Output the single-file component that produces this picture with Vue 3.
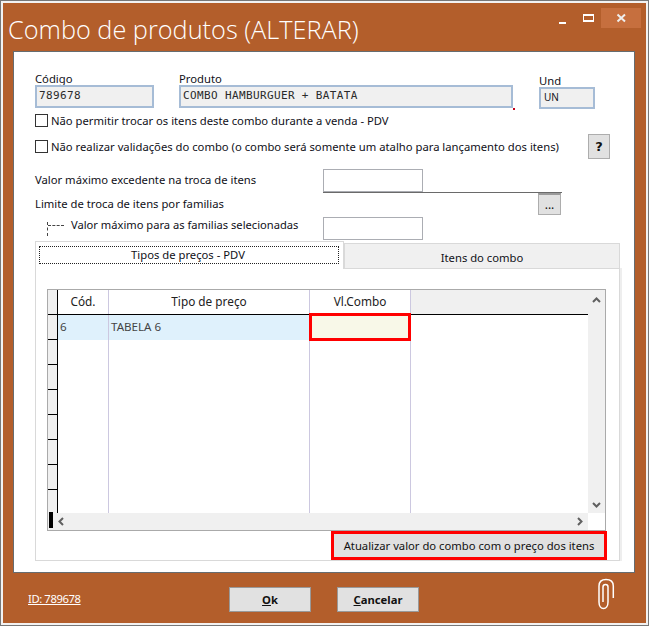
<script setup>
const rows = [0,1,2,3,4,5,6,7]
</script>

<template>
  <div class="win">
    <header class="titlebar">
      <h1 class="title">Combo de produtos (ALTERAR)</h1>
      <div class="caps">
        <span class="cap"><i class="min"></i></span>
        <span class="cap"><i class="max"></i></span>
        <span class="cap close">
          <svg width="11" height="10" viewBox="0 0 11 10"><path d="M1.5 1.5 9 8.5M9 1.5 1.5 8.5" stroke="#eee" stroke-width="2" fill="none"/></svg>
        </span>
      </div>
    </header>

    <main class="client">
      <section class="top">
        <div class="field f-cod"><label>Código</label><div class="inp mono">789678</div></div>
        <div class="field f-prod"><label>Produto</label><div class="inp mono">COMBO HAMBURGUER + BATATA</div><b class="dot"></b></div>
        <div class="field f-und"><label>Und</label><div class="inp und">UN</div></div>
      </section>

      <div class="chk c1"><span class="box"></span><span>Não permitir trocar os itens deste combo durante a venda - PDV</span></div>
      <div class="chk c2"><span class="box"></span><span>Não realizar validações do combo (o combo será somente um atalho para lançamento dos itens)</span><button class="help">?</button></div>

      <div class="line l1"><span class="lbl">Valor máximo excedente na troca de itens</span><div class="box-in"></div></div>
      <div class="line l2"><span class="lbl">Limite de troca de itens por familias</span>
        <div class="lookup"><button class="dots">...</button></div>
      </div>
      <div class="line l3">
        <span class="tree"></span><span class="l3t">Valor máximo para as familias selecionadas</span><div class="box-in"></div>
      </div>

      <div class="tabs">
        <div class="tab active"><span class="focus">Tipos de preços - PDV</span></div>
        <div class="tab other">Itens do combo</div>
      </div>
      <div class="panel">
        <div class="grid">
          <div class="gbody">
            <div class="ghead">
              <div class="ind"></div>
              <div class="hc c-cod">Cód.</div>
              <div class="hc c-tipo">Tipo de preço</div>
              <div class="hc c-val">Vl.Combo</div>
              <div class="hfill"></div>
            </div>
            <div class="grow sel">
              <div class="ind"></div>
              <div class="dc c-cod">6</div>
              <div class="dc c-tipo">TABELA 6</div>
              <div class="dc c-val edit"></div>
            </div>
            <div class="grow" v-for="r in rows" :key="r">
              <div class="ind"></div>
              <div class="dc c-cod"></div>
              <div class="dc c-tipo"></div>
              <div class="dc c-val"></div>
            </div>
          </div>
          <div class="vbar">
            <svg width="9" height="6" viewBox="0 0 9 6"><path d="M1 5 4.500 1.500 8 5" fill="none" stroke="#606060" stroke-width="2"/></svg>
            <svg width="9" height="6" viewBox="0 0 9 6"><path d="M1 1 4.500 4.500 8 1" fill="none" stroke="#606060" stroke-width="2"/></svg>
          </div>
          <div class="hbar">
            <i class="hstub"></i>
            <svg width="6" height="9" viewBox="0 0 6 9"><path d="M5 1 1.500 4.500 5 8" fill="none" stroke="#606060" stroke-width="2"/></svg>
            <svg class="hr" width="6" height="9" viewBox="0 0 6 9"><path d="M1 1 4.500 4.500 1 8" fill="none" stroke="#606060" stroke-width="2"/></svg>
          </div>
        </div>
        <div class="update"><button>Atualizar valor do combo com o preço dos itens</button></div>
      </div>
    </main>

    <footer class="foot">
      <a class="id">ID: 789678</a>
      <div class="btns">
        <button class="fbtn"><u>O</u>k</button>
        <button class="fbtn"><u>C</u>ancelar</button>
      </div>
      <svg class="clip" width="18" height="32" viewBox="0 0 18 32">
        <path d="M16.300 20V8C16.300 3.500 13 1.500 9 1.500S2 3.500 2 8V24C2 28 4 30.500 6.500 30.500S11 28 11 24V9C11 7.500 9.800 6.500 8.500 6.500S6 7.500 6 9V24" fill="none" stroke="#fff" stroke-width="1.500"/>
      </svg>
    </footer>
  </div>
</template>

<style>
html, body { margin: 0; background: #b35e2b; overflow: hidden; }
</style>

<style scoped>
* { box-sizing: border-box; }
.win {
  width: 649px; height: 626px; background: #b35e2b; overflow: hidden;
  border: 3px solid #f2f2f2; outline: 1px solid #777; outline-offset: -1px;
  font-family: "Noto Sans", sans-serif; font-size: 11.25px; color: #101018;
  display: flex; flex-direction: column;
}
.titlebar { height: 48px; display: flex; justify-content: space-between; padding-left: 5px; flex: none; }
.title { margin: 11px 0 0; font: 300 25.3px/30px "Open Sans", sans-serif; color: #fff; white-space: nowrap; }
.caps { display: flex; align-items: flex-start; padding: 5px 0 0; margin-right: 5px; }
.cap { width: 26px; height: 20px; display: flex; align-items: center; justify-content: center; }
.cap.close { width: 40px; background: #c66f3e; }
.min { width: 7px; height: 2px; background: #fff; margin-top: 9px; }
.max { width: 11px; height: 8px; border: 1px solid #fff; border-top-width: 2px; border-bottom-width: 2px; }
.client {
  flex: none; height: 522px; margin: 0 11px 0 10px; background: #fff;
  border: 1px solid #666c70;
  padding: 0 13px 0 21px; display: flex; flex-direction: column;
}
.top { display: flex; flex: none; height: 57px; padding-top: 20px; }
.field { display: flex; flex-direction: column; position: relative; }
.field label { height: 13px; line-height: 13px; }
.inp { height: 23px; background: #f0f0f0; border: 2px solid #a6bcd6; padding-left: 2px; line-height: 18px; }
.mono { font-family: "DejaVu Sans Mono", monospace; font-size: 11px; letter-spacing: .37px; color: #2a2a2a; }
.f-cod { width: 119px; }
.f-prod { width: 334px; margin-left: 25px; }
.f-und { width: 56px; margin-left: 26px; margin-top: 2px; }
.inp.und { font-size: 10px; padding-left: 3px; line-height: 17px; }
.dot { position: absolute; right: -2px; bottom: -1px; width: 2px; height: 2px; background: #c00018; }
.chk { display: flex; flex: none; align-items: center; gap: 3px; white-space: nowrap; position: relative; }
.box { width: 13px; height: 13px; border: 1px solid #333; background: #fff; flex: none; }
.c1 { height: 19px; margin-top: 2px; }
.c2 { height: 26px; margin-top: 3px; }
.help {
  position: absolute; left: 553px; top: 1px; width: 22px; height: 25px; padding: 0;
  background: #e1e1e1; border: 1px solid #adadad; font: 700 13px "DejaVu Sans", sans-serif; color: #111;
}
.line { display: flex; flex: none; align-items: center; position: relative; white-space: nowrap; }
.lbl { padding-bottom: 2px; }
.l1 { height: 23px; margin-top: 10px; }
.l2 { height: 24px; }
.l3 { height: 23px; margin-top: 1px; }
.box-in { position: absolute; left: 288px; top: 0; width: 100px; height: 23px; border: 1px solid #abadb3; background: #fff; }
.lookup { position: absolute; left: 288px; top: 0; width: 239px; height: 24px; border-top: 1px solid #6a6a6a; }
.dots { position: absolute; right: 1px; top: 0; width: 23px; height: 22px; padding: 0; background: #e1e1e1; border: 1px solid #adadad; border-top: 2px solid #9a9a9a; font: 12px "Noto Sans", sans-serif; color: #111; }
.tree { width: 16px; height: 14px; margin-left: 12px; border-left: 1px dashed #444; position: relative; }
.tree::after { content: ""; position: absolute; left: 0; top: 3px; width: 16px; border-top: 1px dashed #444; }
.l3t { margin-left: 8px; padding-bottom: 8px; font-size: 11.15px; }
.tabs { display: flex; flex: none; height: 27px; margin-top: 1px; align-items: flex-start; position: relative; z-index: 1; }
.tab { display: flex; align-items: center; justify-content: center; }
.active { width: 309px; height: 28px; background: #fff; border: 1px solid #d9d9d9; border-bottom: none; padding: 4px 4px 5px 3px; align-items: stretch; }
.focus { flex: 1; outline: 1px dotted #222; outline-offset: -1px; text-align: center; line-height: 18px; padding-right: 2px; }
.other { width: 276px; height: 25px; margin-top: 2px; background: #f0f0f0; border: 1px solid #d9d9d9; border-bottom: none; padding-top: 2px; }
.panel { flex: none; height: 293px; width: 585px; border: 1px solid #d9d9d9; box-shadow: 2px 0 0 #eee; padding: 20px 0 0 11px; position: relative; }
.grid {
  width: 559px; height: 242px; border: 1px solid #aaa; position: relative;
  display: grid; grid-template-columns: 1fr 17px; grid-template-rows: 1fr 17px; background: #fff;
}
.gbody { overflow: hidden; min-height: 0; }
.ghead { display: flex; height: 25px; border-bottom: 1px solid #000; background: #f0f0f0; }
.ind { width: 10px; flex: none; background: #f0f0f0; border-right: 1px solid #000; }
.hc { background: #fff; display: flex; align-items: center; justify-content: center; border-right: 1px solid #ccc8e0; padding-bottom: 2px; color: #222; font-size: 11.8px; }
.c-cod { width: 51px; }
.c-tipo { width: 201px; }
.c-val { width: 101px; flex: none; }
.hfill { flex: 1; }
.grow { display: flex; height: 25px; }
.grow .ind { border-bottom: 1px solid #000; }
.dc { border-right: 1px solid #ccc8e0; height: 25px; flex: none; line-height: 24px; padding-left: 2px; color: #444; font-size: 11.6px; }
.sel .dc { background: #dff1fc; }
.sel .edit { background: #f8f8e8; position: relative; }
.edit::after { content: ""; position: absolute; left: -1px; right: -1px; top: -2px; bottom: -1px; border: 3px solid #f00; }
.vbar { background: #f0f0f0; display: flex; flex-direction: column; justify-content: space-between; align-items: center; padding: 7px 0 5px; min-height: 0; }
.hbar { background: #f0f0f0; display: flex; align-items: center; position: relative; padding: 0 5px 0 10px; justify-content: space-between; }
.hstub { position: absolute; left: 1px; top: -1px; width: 4px; height: 16px; background: #000; }
.update { position: absolute; right: 12px; top: 262px; }
.update button {
  width: 276px; height: 29px; padding: 0; background: #e1e1e1; border: 3px solid #f00;
  font: 11.25px "Noto Sans", sans-serif; color: #111; white-space: nowrap;
}
.foot { flex: 1; position: relative; }
.id { position: absolute; left: 25px; top: 18px; color: #fff; text-decoration: underline; letter-spacing: -.4px; }
.btns { position: absolute; left: 226px; top: 14px; display: flex; gap: 26px; }
.fbtn { width: 82px; height: 25px; padding: 0; background: #e1e1e1; border: 1px solid #999; font: 700 11.25px "Noto Sans", sans-serif; color: #111; }
.clip { position: absolute; left: 594px; top: 5px; }
</style>
